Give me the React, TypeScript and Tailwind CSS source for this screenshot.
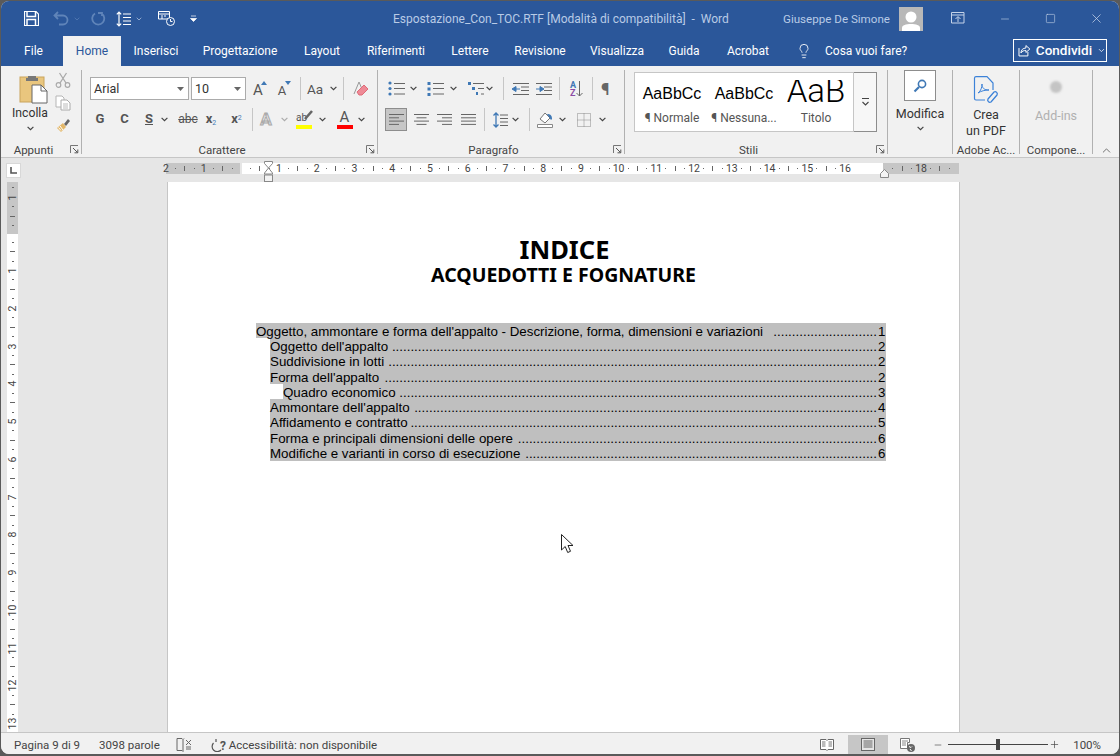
import type { ReactNode } from 'react';
import { ChevronDown, ChevronUp, Lightbulb, Minus, Plus, X, Square } from 'lucide-react';

const TABS = [
  { label: 'Inserisci', w: 'w-[70px]' },
  { label: 'Progettazione', w: 'w-[98px]' },
  { label: 'Layout', w: 'w-[66px]' },
  { label: 'Riferimenti', w: 'w-[82px]' },
  { label: 'Lettere', w: 'w-[66px]' },
  { label: 'Revisione', w: 'w-[74px]' },
  { label: 'Visualizza', w: 'w-[80px]' },
  { label: 'Guida', w: 'w-[54px]' },
  { label: 'Acrobat', w: 'w-[74px]' },
];

const TOC = [
  { text: "Oggetto dell'appalto", page: 2, level: 1, dots: 131 },
  { text: "Suddivisione in lotti", page: 2, level: 1, dots: 132 },
  { text: "Forma dell'appalto ", page: 2, level: 1, dots: 133 },
  { text: 'Quadro economico', page: 3, level: 2, dots: 129 },
  { text: "Ammontare dell'appalto ", page: 4, level: 1, dots: 125 },
  { text: 'Affidamento e contratto', page: 5, level: 1, dots: 126 },
  { text: 'Forma e principali dimensioni delle opere ', page: 6, level: 1, dots: 97 },
  { text: 'Modifiche e varianti in corso di esecuzione ', page: 6, level: 1, dots: 95 },
];

function Chev({ className = '' }: { className?: string }) {
  return (
    <svg width="7" height="5" viewBox="0 0 7 5" className={`shrink-0 ${className}`}>
      <path d="M.6 .8 3.5 3.7 6.4 .8" fill="none" stroke="#444" strokeWidth="1.2" />
    </svg>
  );
}

function Sep({ className = 'h-[23px]' }: { className?: string }) {
  return <div className={`w-px shrink-0 bg-[#c6c6c6] ${className}`} />;
}

function Launcher() {
  return (
    <svg width="9" height="9" viewBox="0 0 9 9" className="shrink-0">
      <path d="M.5 8V.5H8" fill="none" stroke="#777" />
      <path d="M3 3 7.5 7.5M7.8 4.5V7.8H4.5" fill="none" stroke="#555" />
    </svg>
  );
}

function Group({ w, label, launcher, border = true, children }: { w: string; label: string; launcher?: boolean; border?: boolean; children: ReactNode }) {
  return (
    <div className={`relative flex h-[84px] shrink-0 flex-col ${w} ${border ? 'border-r border-[#b1b1b1]' : ''}`}>
      <div className="min-h-0 flex-1">{children}</div>
      <div className={`-mb-[3px] flex h-[14px] items-center justify-center whitespace-nowrap text-[11.5px] leading-[14px] text-[#444] ${launcher ? 'pr-[15px]' : ''}`}>
        {label}
      </div>
      {launcher && (
        <div className="absolute bottom-0 right-[2px]">
          <Launcher />
        </div>
      )}
    </div>
  );
}

function Ico({ w = 16, h = 16, children }: { w?: number; h?: number; children: ReactNode }) {
  return (
    <svg width={w} height={h} viewBox={`0 0 ${w} ${h}`} className="shrink-0">
      {children}
    </svg>
  );
}

function Clipboard() {
  return (
    <Ico w={29} h={30}>
      <rect x="1" y="3" width="24" height="25" fill="#e9c67e" stroke="#c9a45c" />
      <path d="M9 4V2h8v2h2v3H7V4z" fill="#777" />
      <path d="M13 11h9l6 6v12H13z" fill="#fff" stroke="#666" />
      <path d="M22 11v6h6" fill="none" stroke="#666" />
    </Ico>
  );
}

function Scissors() {
  return (
    <Ico>
      <circle cx="3.5" cy="13" r="2.3" fill="none" stroke="#aaa" strokeWidth="1.2" />
      <circle cx="12.5" cy="13" r="2.3" fill="none" stroke="#aaa" strokeWidth="1.2" />
      <path d="M5 11 11.5 1M11 11 4.5 1" stroke="#aaa" strokeWidth="1.3" fill="none" />
    </Ico>
  );
}

function CopyIcon() {
  return (
    <Ico>
      <path d="M1 1h6l2 2v9H1z" fill="#fff" stroke="#b5b5b5" />
      <path d="M6 5h6l3 3v7H6z" fill="#fff" stroke="#aaa" />
      <path d="M8 9h5M8 11h5M8 13h5" stroke="#bbb" />
    </Ico>
  );
}

function Brush() {
  return (
    <Ico>
      <path d="M9 7 13 2l2 2-4 5z" fill="#666" />
      <path d="M2 11 8 6l3 4-5 5z" fill="#e3b768" />
      <path d="M5 9l3 4M3.5 10.5l2.5 3" stroke="#fff" />
    </Ico>
  );
}

function PasteGroup() {
  return (
    <div className="flex h-full">
      <div className="flex w-[58px] flex-col items-center pt-[4px]">
        <div className="ml-[6px]">
          <Clipboard />
        </div>
        <span className="mt-[1px] text-[12.2px] leading-[17px] text-[#333]">Incolla</span>
        <Chev className="mt-[4px]" />
      </div>
      <div className="-ml-[4px] flex flex-col items-center gap-[6.5px] pt-[2px]">
        <Scissors />
        <CopyIcon />
        <Brush />
      </div>
    </div>
  );
}

function Combo({ w, value }: { w: string; value: string }) {
  return (
    <div className={`flex h-[23px] items-center justify-between border border-[#ababab] bg-white pl-[3px] pr-[4px] ${w}`}>
      <span className="text-[12.5px] leading-[16px] text-[#333]">{value}</span>
      <svg width="7" height="4" viewBox="0 0 7 4">
        <path d="M0 0h7L3.5 4z" fill="#666" />
      </svg>
    </div>
  );
}

function GrowFont({ up }: { up?: boolean }) {
  return (
    <div className="relative flex h-[22px] w-[24px] items-end justify-center text-[#555]">
      <span className={`${up ? 'text-[15px]' : 'text-[13px]'} leading-[19px]`}>A</span>
      <svg width="6" height="4" viewBox="0 0 6 4" className="absolute right-[3px] top-[3px]">
        <path d={up ? 'M0 4 3 0l3 4z' : 'M0 0l3 4 3-4z'} fill="#3f78b5" />
      </svg>
    </div>
  );
}

function FontGroup() {
  return (
    <div className="flex flex-col pt-[7px]">
      <div className="flex h-[23px] items-center pl-[8px]">
        <Combo w="w-[99px]" value="Arial" />
        <div className="w-[2px]" />
        <Combo w="w-[55px]" value="10" />
        <GrowFont up />
        <GrowFont />
        <div className="w-[6px]" />
        <Sep />
        <span className="ml-[6px] w-[17px] text-[13.5px] leading-[16px] text-[#555]">Aa</span>
        <Chev className="ml-[6px]" />
        <div className="w-[6px]" />
        <Sep />
        <div className="ml-[9px]">
          <Ico>
            <path d="M6 1 1 13M6 1l3 7" stroke="#999" fill="none" />
            <path d="M4 11 11 4l4 4-6 6H6z" fill="#ee8a96" stroke="#e06a78" />
          </Ico>
        </div>
      </div>
      <div className="mt-[8px] flex h-[22px] items-center pl-[6px] text-[#555]">
        <span className="w-[24px] text-center text-[13px] font-bold leading-[16px]">G</span>
        <span className="w-[25px] text-center text-[13px] font-bold leading-[16px]">C</span>
        <span className="w-[24px] text-center text-[13px] font-bold leading-[16px] underline">S</span>
        <Chev />
        <span className="ml-[7px] w-[26px] text-center text-[12px] leading-[16px] line-through">abc</span>
        <span className="-ml-[1px] w-[22px] text-center text-[13px] font-bold leading-[16px]">
          x<sub className="text-[7px] font-normal text-[#3f78b5]">2</sub>
        </span>
        <span className="ml-[3px] w-[23px] text-center text-[13px] font-bold leading-[16px]">
          x<sup className="text-[7px] font-normal text-[#3f78b5]">2</sup>
        </span>
        <div className="w-[4px]" />
        <Sep />
        <span className="ml-[6px] w-[14px] text-center text-[17px] font-bold leading-[20px] text-[#e4e4e4] [-webkit-text-stroke:1px_#aaa]">A</span>
        <Chev className="ml-[8px] opacity-40" />
        <div className="relative ml-[8px] flex h-[20px] w-[17px] flex-col items-start justify-end">
          <span className="text-[10px] leading-[12px]">ab</span>
          <svg width="9" height="10" viewBox="0 0 9 10" className="absolute right-0 top-[1px]">
            <path d="M1 9 8 1" stroke="#666" strokeWidth="2.5" />
          </svg>
          <div className="mt-[1px] h-[4px] w-[16px] bg-[#ffff00]" />
        </div>
        <Chev className="ml-[6px]" />
        <div className="ml-[10px] flex h-[20px] w-[17px] flex-col items-center justify-end">
          <span className="text-[15px] leading-[15px]">A</span>
          <div className="h-[4px] w-[16px] bg-[#ff0000]" />
        </div>
        <Chev className="ml-[5px]" />
      </div>
    </div>
  );
}

function ListIcon({ kind }: { kind: 'bullet' | 'num' | 'multi' }) {
  return (
    <Ico w={17} h={15}>
      {kind === 'bullet' && [2, 7.5, 13].map((y) => <circle key={y} cx="2" cy={y} r="1.6" fill="#3f78b5" />)}
      {kind === 'num' && [1, 6.5, 12].map((y) => <rect key={y} x="0.5" y={y} width="3" height="3" fill="#3f78b5" />)}
      {kind === 'multi' && (
        <>
          <rect x="0" y="1" width="3" height="3" fill="#3f78b5" />
          <rect x="4" y="6" width="3" height="3" fill="#3f78b5" />
          <rect x="8" y="11" width="2" height="3" fill="#3f78b5" />
        </>
      )}
      <path
        d={kind === 'multi' ? 'M5 2.5h11M10 7.5h6M13 13h3' : 'M6 2.5h11M6 7.5h11M6 13h11'}
        stroke="#666"
        fill="none"
      />
    </Ico>
  );
}

function IndentIcon({ flip }: { flip?: boolean }) {
  return (
    <Ico w={17} h={14}>
      <path d="M1 1.5h16M9 5h8M9 8.5h8M1 12.5h16" stroke="#666" fill="none" />
      <path d={flip ? 'M1 7h4V4.5L9 7 5 9.5V7' : 'M8 7H4V4.5L0 7l4 2.5V7'} fill="#3f78b5" stroke="#3f78b5" />
    </Ico>
  );
}

function AlignIcon({ rows }: { rows: [number, number][] }) {
  return (
    <Ico w={15} h={13}>
      {rows.map(([x, w], i) => (
        <path key={i} d={`M${x} ${1.5 + i * 3.3}h${w}`} stroke="#666" fill="none" />
      ))}
    </Ico>
  );
}

function ParagraphGroup() {
  return (
    <div className="flex flex-col pt-[7px]">
      <div className="flex h-[23px] items-center pl-[10px]">
        <ListIcon kind="bullet" />
        <Chev className="ml-[5px]" />
        <div className="ml-[10px]">
          <ListIcon kind="num" />
        </div>
        <Chev className="ml-[6px]" />
        <div className="ml-[11px]">
          <ListIcon kind="multi" />
        </div>
        <Chev className="ml-[1px]" />
        <div className="w-[10px]" />
        <Sep />
        <div className="ml-[8px]">
          <IndentIcon />
        </div>
        <div className="ml-[6px]">
          <IndentIcon flip />
        </div>
        <div className="w-[7px]" />
        <Sep />
        <div className="ml-[10px] flex h-[18px] w-[15px] items-center">
          <div className="flex flex-col text-[9px] font-bold leading-[8px]">
            <span className="text-[#3f78b5]">A</span>
            <span className="text-[#8b4aa5]">Z</span>
          </div>
          <svg width="7" height="16" viewBox="0 0 7 16">
            <path d="M3.5 0v15M.5 12l3 3 3-3" stroke="#666" fill="none" />
          </svg>
        </div>
        <div className="w-[7px]" />
        <Sep />
        <span className="ml-[8px] text-[17px] font-bold leading-[20px] text-[#666]">¶</span>
      </div>
      <div className="mt-[8px] flex h-[23px] items-center pl-[7px]">
        <div className="flex h-[23px] w-[22px] items-center justify-center border border-[#8d8d8d] bg-[#c6c6c6]">
          <AlignIcon rows={[[0, 15], [0, 10], [0, 15], [0, 10]]} />
        </div>
        <div className="ml-[7px]">
          <AlignIcon rows={[[0, 15], [2.5, 10], [0, 15], [2.5, 10]]} />
        </div>
        <div className="ml-[8px]">
          <AlignIcon rows={[[0, 15], [5, 10], [0, 15], [5, 10]]} />
        </div>
        <div className="ml-[9px]">
          <AlignIcon rows={[[0, 15], [0, 15], [0, 15], [0, 15]]} />
        </div>
        <div className="w-[8px]" />
        <Sep />
        <div className="ml-[8px]">
          <Ico w={15} h={16}>
            <path d="M3 1v14M.5 3.500 3 1l2.500 2.500M.5 12.500 3 15l2.500-2.500" stroke="#3f78b5" fill="none" strokeWidth="1.3" />
            <path d="M7 3h8M7 6.500h8M7 10h8M7 13.500h8" stroke="#666" fill="none" />
          </Ico>
        </div>
        <Chev className="ml-[4px]" />
        <div className="w-[10px]" />
        <Sep />
        <div className="ml-[7px]">
          <Ico w={16} h={17}>
            <path d="M3 8 8 2l5 5-5 5z" fill="#fff" stroke="#777" />
            <path d="M10 3c3 0 5 1 5 5l-1 1-2-3z" fill="#3f78b5" />
            <path d="M.5 13.500h15v3H.5z" fill="#fff" stroke="#888" />
          </Ico>
        </div>
        <Chev className="ml-[6px]" />
        <div className="ml-[11px]">
          <Ico w={14} h={14}>
            <rect x=".5" y=".5" width="13" height="13" fill="none" stroke="#888" strokeDasharray="1 1" />
            <path d="M7 .5v13M.5 7h13" stroke="#888" strokeDasharray="1 1" />
          </Ico>
        </div>
        <Chev className="ml-[8px]" />
      </div>
    </div>
  );
}

function StyleItem({ sample, label, big }: { sample: string; label: string; big?: boolean }) {
  return (
    <div className="flex w-[72px] flex-col items-center">
      <div className="flex h-[32px] w-full items-end justify-center">
        {big ? (
          <div className="mb-[2px] flex h-[23px] items-end overflow-hidden">
            <span className="font-['Roboto',sans-serif] text-[33px] font-light leading-[24px] text-black">{sample}</span>
          </div>
        ) : (
          <span className="font-['Liberation_Sans',sans-serif] text-[16px] leading-[23px] text-black">{sample}</span>
        )}
      </div>
      <span className="mt-[5px] whitespace-nowrap text-[12px] leading-[16px] text-[#555]">{label}</span>
    </div>
  );
}

function StylesGroup() {
  return (
    <div className="flex pl-[9px] pt-[2px]">
      <div className="flex h-[60px] w-[220px] border border-[#c6c6c6] bg-white pl-[1px]">
        <StyleItem sample="AaBbCc" label="¶ Normale" />
        <StyleItem sample="AaBbCc" label="¶ Nessuna..." />
        <StyleItem sample="AaB" label="Titolo" big />
      </div>
      <div className="flex h-[60px] w-[23px] items-center justify-center border border-l-0 border-[#8d8d8d] bg-[#f7f7f7]">
        <svg width="9" height="9" viewBox="0 0 9 9">
          <path d="M1 .5h7M1.500 4 4.500 7 7.500 4" fill="none" stroke="#444" strokeWidth="1.1" />
        </svg>
      </div>
    </div>
  );
}

function ModificaGroup() {
  return (
    <div className="flex flex-col items-center">
      <div className="flex h-[31px] w-[32px] items-center justify-center border border-[#8d8d8d] bg-white">
        <svg width="14" height="14" viewBox="0 0 14 14">
          <circle cx="9" cy="5" r="3.6" fill="none" stroke="#3f78b5" strokeWidth="1.6" />
          <path d="M6 8 1.500 12.500" stroke="#3f78b5" strokeWidth="2.2" />
        </svg>
      </div>
      <span className="mt-[4px] text-[12.5px] leading-[17px] text-[#333]">Modifica</span>
      <Chev className="mt-[4px]" />
    </div>
  );
}

function PdfGroup() {
  return (
    <div className="flex flex-col items-center pt-[6px]">
      <svg width="26" height="29" viewBox="0 0 26 29">
        <path d="M12 24H3a1.500 1.500 0 0 1-1.500-1.500V2A1.500 1.500 0 0 1 3 .7h11L20 7v7" fill="none" stroke="#3c82d8" strokeWidth="1.2" />
        <path d="M5 17c3-2 4-6 4-9 0 4 2 6 7 6-4 0-8 1-11 3z" fill="none" stroke="#3c82d8" />
        <path d="M15 23l6-7a2.200 2.200 0 0 1 3 3l-6 7a2.200 2.200 0 0 1-3-3z" fill="none" stroke="#3c82d8" strokeWidth="1.3" />
      </svg>
      <span className="mt-[2px] text-[12.5px] leading-[16px] text-[#333]">Crea</span>
      <span className="text-[12.5px] leading-[16px] text-[#333]">un PDF</span>
    </div>
  );
}

function AddinsGroup() {
  return (
    <div className="flex flex-col items-center pt-[11px]">
      <div className="h-[12px] w-[12px] rounded-full bg-[#c4c4c4] blur-[1px]" />
      <span className="mt-[14px] text-[12.5px] leading-[17px] text-[#b0b0b0]">Add-ins</span>
    </div>
  );
}

// rulers: slots are a quarter of a cm each
function HSlot({ v }: { v: string }) {
  return (
    <div className="flex h-full w-[9.45px] shrink-0 items-center justify-center">
      {v === '.' && <div className="h-px w-px bg-[#666]" />}
      {v === '|' && <div className="h-[5px] w-px bg-[#666]" />}
      {v !== '.' && v !== '|' && <span className="text-[10.5px] leading-[11px] text-[#444]">{v}</span>}
    </div>
  );
}

function VSlot({ v }: { v: string }) {
  return (
    <div className="flex h-[9.45px] w-full shrink-0 items-center justify-center">
      {v === '.' && <div className="h-px w-[2px] bg-[#666]" />}
      {v === '|' && <div className="h-px w-[5px] bg-[#666]" />}
      {v !== '.' && v !== '|' && <span className="-rotate-90 whitespace-nowrap text-[10.5px] leading-[11px] text-[#444]">{v}</span>}
    </div>
  );
}

const cmSlots = (from: number, to: number) => {
  const out: string[] = [];
  for (let i = from; i <= to; i++) out.push('.', '|', '.', String(i));
  return out;
};

function HRuler() {
  const white = cmSlots(1, 16);
  const right = ['.', '|', '.', '18', '.', '|', '.'];
  return (
    <div className="relative flex h-[11px] w-[793px] shrink-0">
      <div className="flex w-[74px] shrink-0 bg-[#c6c6c6]">
        <div className="-ml-[4.7px] flex">
          {['2', '.', '|', '.', '1', '.', '|', '.'].map((v, i) => (
            <HSlot key={i} v={v} />
          ))}
        </div>
      </div>
      <div className="w-[2px] shrink-0 bg-[#e6e6e6]" />
      <div className="flex w-[641px] shrink-0 bg-white pl-[3.8px]">
        {white.map((v, i) => (
          <HSlot key={i} v={v} />
        ))}
      </div>
      <div className="flex w-[76px] shrink-0 bg-[#c6c6c6] pl-[5px]">
        {right.map((v, i) => (
          <HSlot key={i} v={v} />
        ))}
      </div>
      {/* indent markers */}
      <svg width="10" height="22" viewBox="0 0 10 22" className="absolute left-[98px] -top-[2px]">
        <path d="M.5 .5h8v2L4.500 7l4 5v1h-8v-1l4-5-4-4.500z" fill="#fff" stroke="#888" />
        <rect x=".5" y="14" width="8" height="6.500" fill="#f3f3f3" stroke="#888" />
      </svg>
      <svg width="10" height="9" viewBox="0 0 10 9" className="absolute left-[714px] top-[6px]">
        <path d="M.5 8.500v-4l4-4 4 4v4z" fill="#f3f3f3" stroke="#888" />
      </svg>
    </div>
  );
}

function VRuler() {
  const top = ['.', '1', '.', '|', '.'];
  const white = cmSlots(1, 13);
  return (
    <div className="ml-[6px] flex h-full w-[11px] flex-col">
      <div className="flex h-[52px] shrink-0 flex-col bg-[#c6c6c6] pt-[1px]">
        {top.map((v, i) => (
          <VSlot key={i} v={v} />
        ))}
      </div>
      <div className="flex min-h-0 flex-1 flex-col bg-white pt-[3.5px]">
        {white.map((v, i) => (
          <VSlot key={i} v={v} />
        ))}
      </div>
    </div>
  );
}

function TocRow({ text, page, level, dots }: { text: string; page: number; level: number; dots: number }) {
  const indent = level === 0 ? '' : level === 1 ? 'ml-[14px]' : 'ml-[27px]';
  return (
    <div className={`flex h-[15.3px] items-center justify-between bg-[#bfbfbf] pr-[1px] pt-[1px] ${indent}`}>
      <span className="shrink-0 whitespace-pre">{text}</span>
      <span className="flex shrink-0 whitespace-nowrap">
        <span>{'.'.repeat(dots)}</span>
        <span className="w-[8px] pl-[1px]">{page}</span>
      </span>
    </div>
  );
}

function DocPage() {
  return (
    <div className="flex h-full w-[793px] shrink-0 flex-col items-center border-x border-[#c6c6c6] bg-white">
      <h1 className="ml-[2px] mt-[54px] font-['Noto_Sans',sans-serif] text-[25.5px] font-bold leading-[26px] text-black">INDICE</h1>
      <h2 className="mt-[2px] font-['Noto_Sans',sans-serif] text-[19.5px] font-bold leading-[22px] text-black">ACQUEDOTTI E FOGNATURE</h2>
      <div className="ml-[88px] mt-[37px] w-[630px] self-start font-['Liberation_Sans',sans-serif] text-[13.33px] leading-[15px] text-black">
        <TocRow text="Oggetto, ammontare e forma dell'appalto - Descrizione, forma, dimensioni e variazioni  " page={1} level={0} dots={28} />
        {TOC.map((r) => (
          <TocRow key={r.text} {...r} />
        ))}
      </div>
    </div>
  );
}

function StatusRight() {
  return (
    <div className="flex h-full items-center">
      <Ico w={14} h={14}>
        <path d="M.5 1.500h5.500L7 2.500l1-1h5.500v10H8L7 12.500l-1-1H.5z" fill="#fff" stroke="#666" />
        <path d="M2 4h3.500M2 6h3.500M2 8h3.500M8.500 4H12M8.500 6H12M8.500 8H12" stroke="#777" />
      </Ico>
      <div className="ml-[14px] flex h-full w-[40px] items-center justify-center bg-[#c6c6c6]">
        <Ico w={14} h={13}>
          <rect x=".5" y=".5" width="13" height="12" fill="#e5e5e5" stroke="#666" />
          <path d="M2.500 3h9M2.500 5h9M2.500 7h9M2.500 9h9" stroke="#666" />
        </Ico>
      </div>
      <div className="ml-[12px]">
        <Ico w={15} h={14}>
          <path d="M.5 .5h9v4h-2v6h-7z" fill="#fff" stroke="#777" />
          <path d="M2 3h6M2 5h4M2 7h4" stroke="#888" />
          <circle cx="11" cy="10" r="4" fill="#666" />
          <path d="M9 8.500l2 1 1-1M10 11l1.500 2" stroke="#fff" fill="none" />
        </Ico>
      </div>
      <Minus size={10} strokeWidth={1.5} color="#444" className="ml-[18px]" />
      <div className="relative ml-[5px] flex h-[11px] w-[100px] items-center">
        <div className="h-px w-full bg-[#444]" />
        <div className="absolute left-[48px] h-[11px] w-[4px] bg-[#444]" />
      </div>
      <Plus size={11} strokeWidth={1.5} color="#444" className="ml-[1px]" />
      <span className="ml-[13px] text-[11.5px] leading-[14px] text-[#444]">100%</span>
    </div>
  );
}

export default function App() {
  return (
    <div className="relative flex h-[756px] w-[1120px] flex-col overflow-hidden bg-[#5a5a5a] p-[1px] pb-[2px] font-['Roboto',sans-serif]">
      <div className="flex min-h-0 flex-1 flex-col overflow-hidden rounded-[8px] bg-[#e6e6e6]">
        {/* title bar */}
        <div className="flex h-[35px] shrink-0 items-center bg-[#2b579a] text-[#b9cbe6]">
          <div className="flex w-[370px] shrink-0 items-center pl-[23px]">
            <svg width="15" height="15" viewBox="0 0 15 15">
              <path d="M.5 .5h11.500l2.500 2.500v11.500H.5z" fill="none" stroke="#fff" strokeWidth="1.200" />
              <path d="M3 1v4.500h8.500V1M3 14V8.500h8.500V14" fill="none" stroke="#fff" strokeWidth="1.500" />
            </svg>
            <svg width="17" height="15" viewBox="0 0 17 15" className="ml-[14px]">
              <path d="M5 1 1.500 4.500 5 8M2 4.500h8a4.500 4.500 0 0 1 0 9H6" fill="none" stroke="#5f84b9" strokeWidth="1.800" />
            </svg>
            <ChevronDown size={8} color="#5f84b9" className="ml-[3px]" />
            <svg width="15" height="15" viewBox="0 0 15 15" className="ml-[10px]">
              <path d="M4 2.500a6 6 0 1 0 6.500 0M11 1v4M11 2H7" fill="none" stroke="#5f84b9" strokeWidth="1.800" />
            </svg>
            <svg width="15" height="16" viewBox="0 0 15 16" className="ml-[10px]">
              <path d="M3 1v14M.8 3.300 3 1l2.200 2.300M.8 12.700 3 15l2.200-2.300" fill="none" stroke="#fff" strokeWidth="1.200" />
              <path d="M7 3h8M7 6.500h8M7 10h8M7 13.500h8" stroke="#fff" />
            </svg>
            <ChevronDown size={8} color="#c5d3e8" className="ml-[4px]" />
            <svg width="18" height="17" viewBox="0 0 18 17" className="ml-[15px]">
              <path d="M.5 1.500h11V9H.5z" fill="none" stroke="#fff" />
              <path d="M.5 4h11M3 6h2M6 6h2M3 8h2" stroke="#fff" />
              <circle cx="12.500" cy="11.500" r="4" fill="#2b579a" stroke="#fff" />
              <path d="M12.500 9v2.500h2" fill="none" stroke="#fff" />
            </svg>
            <svg width="7" height="7" viewBox="0 0 7 7" className="ml-[14px]">
              <path d="M1 1h5M.5 3.500h6L3.500 6.500z" fill="#fff" stroke="#fff" strokeWidth="0.700" />
            </svg>
          </div>
          <span className="w-[412px] shrink-0 whitespace-pre pl-[22px] text-[12px] leading-[14px]">
            Espostazione_Con_TOC.RTF [Modalità di compatibilità]  -  Word
          </span>
          <span className="w-[116px] shrink-0 whitespace-nowrap text-[11.6px] leading-[14px]">Giuseppe De Simone</span>
          <div className="flex h-[24px] w-[24px] shrink-0 items-end justify-center overflow-hidden bg-[#b8b8b8]">
            <svg width="20" height="21" viewBox="0 0 20 21">
              <circle cx="10" cy="7" r="5.500" fill="#fff" />
              <path d="M1 21v-3c0-3 4-4 9-4s9 1 9 4v3z" fill="#fff" />
            </svg>
          </div>
          <div className="ml-[28px] flex w-[14px] items-center">
            <svg width="14" height="13" viewBox="0 0 14 13">
              <path d="M.5 .5h12.500v10.500H.5zM.5 3h12.500M7 10V5M4.500 7 7 4.500 9.500 7" fill="none" stroke="#c5d3e8" />
            </svg>
          </div>
          <Minus size={12} color="#c5d3e8" className="ml-[34px]" strokeWidth={1.2} />
          <Square size={11} color="#c5d3e8" className="ml-[34px]" strokeWidth={1.3} />
          <X size={15} color="#c5d3e8" className="ml-[33px]" strokeWidth={1.2} />
        </div>

        {/* tabs */}
        <div className="flex h-[30px] shrink-0 items-stretch bg-[#2b579a] text-[12px] text-white">
          <div className="flex w-[62px] items-center justify-center pl-[3px]">File</div>
          <div className="flex w-[58px] items-center justify-center bg-[#f1f1f1] text-[#2b579a]">Home</div>
          {TABS.map((t) => (
            <div key={t.label} className={`flex items-center justify-center ${t.w}`}>
              {t.label}
            </div>
          ))}
          <div className="ml-[11px] flex items-center">
            <Lightbulb size={16} strokeWidth={1.3} color="#fff" />
            <span className="ml-[13px]">Cosa vuoi fare?</span>
          </div>
          <div className="ml-auto mr-[12px] mt-[3px] flex h-[23px] w-[94px] items-center border border-white pl-[4px]">
            <svg width="13" height="13" viewBox="0 0 13 13">
              <path d="M1 4v8h9V8M3 9c0-3 2-5 5-5V1.500L12 5 8 8.500V6.500C6 6.500 4 7 3 9z" fill="none" stroke="#fff" />
            </svg>
            <span className="ml-[5px] text-[13.5px] font-medium">Condividi</span>
            <ChevronDown size={9} color="#fff" className="ml-[5px]" />
          </div>
        </div>

        {/* ribbon */}
        <div className="flex h-[92px] shrink-0 items-start border-b border-[#c6c6c6] bg-[#f1f1f1] pt-[4px]">
          <Group w="w-[81px]" label="Appunti" launcher>
            <PasteGroup />
          </Group>
          <Group w="w-[296px]" label="Carattere" launcher>
            <FontGroup />
          </Group>
          <Group w="w-[247px]" label="Paragrafo" launcher>
            <ParagraphGroup />
          </Group>
          <Group w="w-[263px]" label="Stili" launcher>
            <StylesGroup />
          </Group>
          <Group w="w-[65px]" label="">
            <ModificaGroup />
          </Group>
          <Group w="w-[67px]" label="Adobe Ac...">
            <PdfGroup />
          </Group>
          <Group w="w-[73px]" label="Compone...">
            <AddinsGroup />
          </Group>
          <div className="flex h-[88px] flex-1 items-end justify-center pb-[1px]">
            <ChevronUp size={13} color="#555" strokeWidth={1.5} />
          </div>
        </div>

        {/* ruler row */}
        <div className="flex h-[24px] shrink-0 items-start bg-[#e6e6e6] pl-[5px] pt-[5px]">
          <div className="flex h-[15px] w-[15px] shrink-0 items-center justify-center border border-[#d8d8d8] bg-white">
            <svg width="7" height="7" viewBox="0 0 7 7">
              <path d="M1 0v6h6" fill="none" stroke="#555" strokeWidth="1.600" />
            </svg>
          </div>
          <div className="ml-[145px]">
            <HRuler />
          </div>
        </div>

        {/* document */}
        <div className="flex min-h-0 flex-1">
          <div className="w-[166px] shrink-0">
            <VRuler />
          </div>
          <DocPage />
        </div>

        {/* status bar */}
        <div className="flex h-[22px] shrink-0 items-center justify-between border-t border-[#c6c6c6] bg-[#f1f1f1] pl-[13px] pr-[18px] pt-[2px] text-[11.5px] leading-[14px] text-[#444]">
          <div className="flex items-center">
            <span>Pagina 9 di 9</span>
            <span className="ml-[19px]">3098 parole</span>
            <div className="ml-[16px]">
              <Ico w={16} h={14}>
                <path d="M6 .5H1v12h5l1 1V1.500zM7 1.500 8 .5" fill="none" stroke="#666" />
                <path d="M10 2l5 5M15 2l-5 5M10 9h5M10 11h5" stroke="#666" fill="none" />
              </Ico>
            </div>
            <div className="ml-[19px]">
              <Ico w={17} h={14}>
                <path d="M5 1v3M2.500 5A5 5 0 1 0 10 12" fill="none" stroke="#555" strokeWidth="1.200" />
                <text x="9" y="12" fontSize="12" fontWeight="700" fill="#555">?</text>
              </Ico>
            </div>
            <span className="ml-[1px]">Accessibilità: non disponibile</span>
          </div>
          <StatusRight />
        </div>
      </div>

      {/* mouse pointer */}
      <svg width="13" height="20" viewBox="0 0 13 20" className="absolute left-[561px] top-[534px]">
        <path d="M.5 .5v15.500l3.700-3.500 2.500 6 2.800-1.200-2.500-5.800h5z" fill="#fff" stroke="#222" />
      </svg>
    </div>
  );
}
